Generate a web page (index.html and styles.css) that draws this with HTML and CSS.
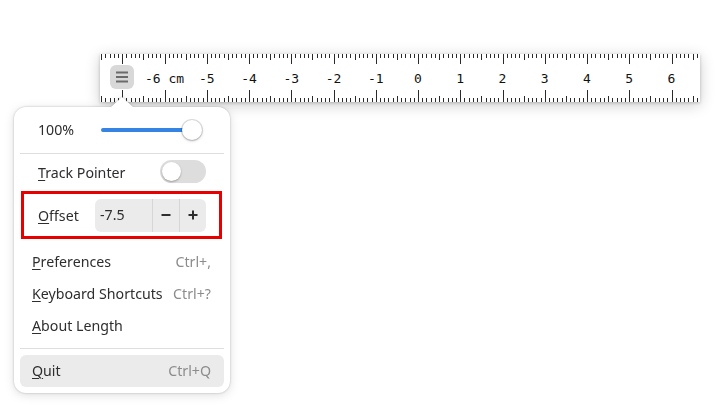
FILE: index.html
```html
<!DOCTYPE html>
<html lang="en">
<head>
<meta charset="utf-8">
<title>Length</title>
<link rel="stylesheet" href="styles.css">
</head>
<body>
<div class="ruler">
  <svg id="ruler-svg" class="ruler-svg" width="600" height="48" viewBox="0 0 600 48"></svg>
  <div class="menu-btn" aria-label="Main menu">
    <svg width="24" height="24" viewBox="0 0 24 24">
      <g stroke="#6b6b6b" stroke-width="2" stroke-linecap="butt">
        <line x1="6" y1="7.5" x2="18" y2="7.5"/>
        <line x1="6" y1="12" x2="18" y2="12"/>
        <line x1="6" y1="16.5" x2="18" y2="16.5"/>
      </g>
    </svg>
  </div>
</div>

<div class="popover">
  <div class="arrow"></div>
  <div class="pop-box">
    <div class="row slider-row">
      <span class="label">100%</span>
      <div class="slider"><div class="track"></div><div class="knob"></div></div>
    </div>
    <div class="sep"></div>
    <div class="row switch-row">
      <span class="label"><u>T</u>rack Pointer</span>
      <div class="switch"><div class="switch-knob"></div></div>
    </div>
    <div class="row offset-row">
      <span class="label"><u>O</u>ffset</span>
      <div class="spin">
        <span class="spin-value">-7.5</span>
        <span class="spin-btn" aria-label="Decrease">
          <svg width="12" height="12" viewBox="0 0 12 12"><rect x="1.5" y="5" width="9" height="2" fill="#2e2e2e"/></svg>
        </span>
        <span class="spin-btn" aria-label="Increase">
          <svg width="12" height="12" viewBox="0 0 12 12"><rect x="1.5" y="5" width="9" height="2" fill="#2e2e2e"/><rect x="5" y="1.5" width="2" height="9" fill="#2e2e2e"/></svg>
        </span>
      </div>
    </div>
    <div class="item first-item"><span><u>P</u>references</span><span class="accel">Ctrl+,</span></div>
    <div class="item"><span><u>K</u>eyboard Shortcuts</span><span class="accel">Ctrl+?</span></div>
    <div class="item"><span><u>A</u>bout Length</span></div>
    <div class="sep"></div>
    <div class="item hover"><span><u>Q</u>uit</span><span class="accel">Ctrl+Q</span></div>
  </div>
</div>
<script src="ruler.js"></script>
</body>
</html>
```

FILE: styles.css
```css
* { box-sizing: border-box; }

html, body {
  margin: 0;
  padding: 0;
  background: #ffffff;
}

body {
  font-family: "Noto Sans", "DejaVu Sans", sans-serif;
  font-size: 14.2px;
  color: #2e2e2e;
  width: 722px;
  height: 419px;
  overflow: hidden;
  padding-top: 54px;
  position: relative;
}

u {
  text-decoration: underline;
  text-decoration-thickness: 1px;
  text-underline-offset: 2px;
}

/* Ruler window */
.ruler {
  position: relative;
  margin-left: 100px;
  width: 600px;
  height: 48px;
  background: #ffffff;
  box-shadow: 0 1px 3px rgba(0, 0, 0, 0.2), 0 3px 14px rgba(0, 0, 0, 0.2);
}

.ruler-svg {
  display: block;
}

.ruler-label {
  font-family: "DejaVu Sans Mono", "Liberation Mono", monospace;
  font-size: 13px;
  fill: #111111;
}

.menu-btn {
  position: absolute;
  left: 10px;
  top: 11px;
  width: 24px;
  height: 24px;
  border-radius: 6px;
  background: #d8d8d8;
}

.menu-btn svg {
  display: block;
}

/* Popover */
.popover {
  position: absolute;
  left: 14px;
  top: 97px;
  width: 216px;
  filter: drop-shadow(0 0 1px rgba(0, 0, 0, 0.22)) drop-shadow(0 2px 5px rgba(0, 0, 0, 0.13));
}

.arrow {
  width: 22px;
  height: 10px;
  margin-left: 97px;
  background: #ffffff;
  clip-path: polygon(50% 0, 100% 100%, 0 100%);
}

.pop-box {
  background: #ffffff;
  border-radius: 12px;
  padding: 6px;
}

.row {
  display: flex;
  align-items: center;
  justify-content: space-between;
  padding: 0 18px;
}

.label {
  white-space: nowrap;
}

.slider-row {
  height: 34px;
  padding-right: 22px;
  padding-bottom: 1px;
}

.slider {
  position: relative;
  width: 101px;
  height: 20px;
}

.track {
  position: absolute;
  left: 0;
  right: 10px;
  top: 8px;
  height: 4px;
  border-radius: 2px;
  background: #3584e4;
}

.knob {
  position: absolute;
  right: 0;
  top: 0;
  width: 20px;
  height: 20px;
  border-radius: 50%;
  background: #ffffff;
  box-shadow: 0 0 0 1px rgba(0, 0, 0, 0.12), 0 1px 3px rgba(0, 0, 0, 0.25);
}

.sep {
  height: 1px;
  background: #dedede;
  margin: 6px 0;
}

.switch-row {
  height: 24px;
}

.switch {
  position: relative;
  width: 46px;
  height: 23px;
  border-radius: 12px;
  background: #dddddd;
  margin-top: -2px;
}

.switch-knob {
  position: absolute;
  left: 2px;
  top: 2px;
  width: 19px;
  height: 19px;
  border-radius: 50%;
  background: #ffffff;
  box-shadow: 0 1px 2px rgba(0, 0, 0, 0.3);
}

.offset-row {
  margin: 7px 2px 0 1px;
  border: 3px solid #e60000;
  height: 48px;
  padding: 0 13px 0 14px;
}

.spin {
  display: flex;
  width: 111px;
  height: 33px;
  border-radius: 6px;
  background: #ebebeb;
  overflow: hidden;
}

.spin-value {
  flex: 1;
  display: flex;
  align-items: center;
  padding-left: 5px;
  padding-bottom: 1px;
}

.spin-btn {
  width: 27px;
  display: flex;
  align-items: center;
  justify-content: center;
  border-left: 1px solid #d6d6d6;
}

.spin-btn svg {
  display: block;
}

.item {
  display: flex;
  align-items: center;
  justify-content: space-between;
  height: 32px;
  padding: 0 13px 2px 12px;
  border-radius: 6px;
  white-space: nowrap;
}

.first-item {
  margin-top: 7px;
}

.accel {
  color: #8c8c8c;
}

.hover {
  background: #ebebeb;
}
```

FILE: ruler.js
```js
(function () {
  var svg = document.getElementById('ruler-svg');
  var NS = 'http://www.w3.org/2000/svg';
  var W = 600, H = 48, zero = 318, mm = 4.225, cm = 42.25;
  var d = '';
  for (var k = -75; k <= 66; k++) {
    var x = Math.round(zero + k * mm) + 0.5;
    if (x < 0 || x > W) continue;
    var major = (k % 10 === 0), half = (k % 5 === 0);
    var top = major ? 10 : (half ? 6 : 4);
    var bot = major ? 12 : (half ? 6 : 4);
    d += 'M' + x + ' 0V' + top + 'M' + x + ' ' + H + 'V' + (H - bot);
  }
  var p = document.createElementNS(NS, 'path');
  p.setAttribute('d', d);
  p.setAttribute('stroke', '#2a2a2a');
  p.setAttribute('stroke-width', '1');
  p.setAttribute('fill', 'none');
  svg.appendChild(p);
  for (var n = -6; n <= 6; n++) {
    var t = document.createElementNS(NS, 'text');
    t.setAttribute('x', (zero + n * cm).toFixed(2));
    t.setAttribute('y', '28.5');
    t.setAttribute('text-anchor', 'middle');
    t.setAttribute('class', 'ruler-label');
    t.textContent = n === -6 ? '-6 cm' : String(n);
    svg.appendChild(t);
  }
})();
```
